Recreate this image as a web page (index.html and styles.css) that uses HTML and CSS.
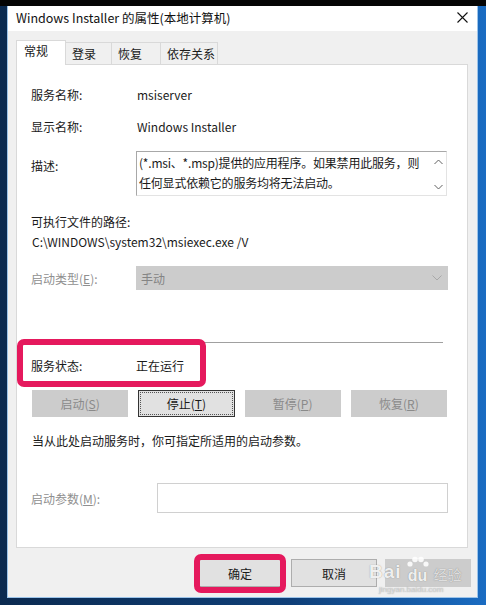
FILE: index.html
```html
<!DOCTYPE html>
<html lang="zh-CN">
<head>
    <meta charset="UTF-8">
    <meta name="viewport" content="width=device-width, initial-scale=1.0">
    <title>Windows Installer 的属性</title>
    <link rel="stylesheet" href="styles.css">
</head>
<body>
    <div class="topbar"></div>
    <div class="window">
        <div class="titlebar">
            <span class="title">Windows Installer 的属性(本地计算机)</span>
            <svg class="close" width="11" height="11" viewBox="0 0 11 11">
                <path d="M0.5 0.5 L10.5 10.5 M10.5 0.5 L0.5 10.5" stroke="#111" stroke-width="1.1" fill="none"/>
            </svg>
        </div>
        <div class="dialog">
            <div class="tabs">
                <div class="tab active" style="width:50px">常规</div>
                <div class="tab" style="width:46px">登录</div>
                <div class="tab" style="width:49px">恢复</div>
                <div class="tab" style="width:57px">依存关系</div>
            </div>
            <div class="panel">
                <div class="row r-name">
                    <span>服务名称:</span>
                    <span class="value">msiserver</span>
                </div>
                <div class="row r-display">
                    <span>显示名称:</span>
                    <span class="value">Windows Installer</span>
                </div>
                <div class="row r-desc">
                    <span class="desc-label">描述:</span>
                    <div class="textbox">
                        <div class="textbox-text">(*.msi、*.msp)提供的应用程序。如果禁用此服务，则<br>任何显式依赖它的服务均将无法启动。</div>
                        <div class="scroll">
                            <svg width="9" height="6" viewBox="0 0 9 6"><path d="M0.5 5 L4.5 1 L8.5 5" stroke="#606060" fill="none"/></svg>
                            <svg width="9" height="6" viewBox="0 0 9 6"><path d="M0.5 1 L4.5 5 L8.5 1" stroke="#606060" fill="none"/></svg>
                        </div>
                    </div>
                </div>
                <div class="path-label">可执行文件的路径:</div>
                <div class="path">C:\WINDOWS\system32\msiexec.exe /V</div>
                <div class="row r-type">
                    <span class="disabled">启动类型(<u>E</u>):</span>
                    <div class="select">
                        <span>手动</span>
                        <svg width="10" height="6" viewBox="0 0 10 6"><path d="M0.5 0.5 L5 5 L9.5 0.5" stroke="#a8a8a8" fill="none"/></svg>
                    </div>
                </div>
                <div class="separator"></div>
                <div class="row r-status">
                    <span>服务状态:</span>
                    <span>正在运行</span>
                </div>
                <div class="buttons">
                    <button type="button" class="btn off">启动(<u>S</u>)</button>
                    <button type="button" class="btn focus">停止(<u>T</u>)</button>
                    <button type="button" class="btn off">暂停(<u>P</u>)</button>
                    <button type="button" class="btn off">恢复(<u>R</u>)</button>
                </div>
                <div class="hint">当从此处启动服务时，你可指定所适用的启动参数。</div>
                <div class="row r-param">
                    <span class="disabled">启动参数(<u>M</u>):</span>
                    <div class="input"></div>
                </div>
                <div class="mark mark-status"></div>
            </div>
            <div class="actions">
                <button type="button" class="btn ok">确定</button>
                <button type="button" class="btn">取消</button>
                <button type="button" class="btn off"></button>
            </div>
        </div>
        <div class="mark mark-ok"></div>
        <div class="watermark">
            <span class="wm-bai">Bai</span>
            <span class="wm-du">
                <svg class="wm-paw" width="26" height="12" viewBox="0 0 26 12">
                    <circle cx="5" cy="8" r="2.6" fill="rgba(255,255,255,0.85)"/>
                    <circle cx="10" cy="3.5" r="2.8" fill="rgba(255,255,255,0.85)"/>
                    <circle cx="16" cy="3.5" r="2.8" fill="rgba(255,255,255,0.85)"/>
                    <circle cx="21" cy="8" r="2.6" fill="rgba(255,255,255,0.85)"/>
                </svg>
                du
            </span>
            <span class="wm-jy">经验</span>
            <div class="wm-url">jingyan.baidu.com</div>
        </div>
    </div>
</body>
</html>
```

FILE: styles.css
```css
*{
    margin: 0;
    padding: 0;
    box-sizing: border-box;
}
body{
    width: 486px;
    height: 605px;
    overflow: hidden;
    background: linear-gradient(90deg, #0b2a50 0%, #0f3f78 60%, #1a6cc2 100%);
    font-family: "Noto Sans CJK SC", "Noto Sans", sans-serif;
    font-size: 12px;
    color: #1a1a1a;
}
.topbar{
    height: 6px;
    background-color: #050505;
}
.window{
    position: relative;
    width: 471px;
    height: 592px;
    margin-left: 7px;
    border: 1px solid #9cc4ea;
    border-top: none;
    background-color: #f0f0f0;
}
.titlebar{
    height: 25px;
    background-color: #fff;
    display: flex;
    align-items: center;
    justify-content: space-between;
    padding: 0 9px 2px 8px;
}
.title{
    font-size: 12.5px;
    color: #111;
}
.dialog{
    padding: 9px 9px 0 8px;
}
.tabs{
    display: flex;
    align-items: flex-end;
    height: 24px;
}
.tab{
    height: 22px;
    padding: 2px 0 0 6px;
    border: 1px solid #d9d9d9;
    border-bottom: none;
    border-left: none;
    background-color: #f0f0f0;
    line-height: 18px;
}
.tab.active{
    position: relative;
    z-index: 1;
    height: 25px;
    margin-bottom: -1px;
    padding: 1px 0 0 7px;
    border-left: 1px solid #d9d9d9;
    background-color: #fff;
}
.panel{
    position: relative;
    height: 484px;
    border: 1px solid #d9d9d9;
    background-color: #fff;
    padding: 0 20px 0 14px;
}
.row{
    display: grid;
    grid-template-columns: 105px 1fr;
    align-items: center;
    height: 20px;
}
.value{
    padding-left: 1px;
}
.r-name{
    margin-top: 19px;
}
.r-display{
    margin-top: 12px;
}
.r-desc{
    margin-top: 15px;
    height: 45px;
    align-items: start;
}
.desc-label{
    padding-top: 6px;
}
.textbox{
    height: 45px;
    border: 1px solid #a8a8a8;
    border-right-color: #e3e3e3;
    border-bottom-color: #e3e3e3;
    display: flex;
}
.textbox-text{
    flex: 1;
    padding: 1px 0 0 2px;
    line-height: 20px;
    white-space: nowrap;
    overflow: hidden;
    letter-spacing: -0.2px;
}
.scroll{
    width: 16px;
    display: flex;
    flex-direction: column;
    justify-content: space-between;
    align-items: center;
    padding: 7px 0 5px;
}
.path-label{
    margin-top: 16px;
    height: 20px;
    line-height: 20px;
}
.path{
    height: 20px;
    line-height: 20px;
    padding-left: 1px;
}
.r-type{
    margin-top: 14px;
    height: 24px;
}
.disabled{
    color: #8f8f8f;
}
.select{
    height: 24px;
    margin-right: -1px;
    background-color: #cccccc;
    color: #848484;
    display: flex;
    align-items: center;
    justify-content: space-between;
    padding: 0 6px 0 5px;
}
.separator{
    margin: 52px 4px 0 0;
    height: 1px;
    background-color: #a0a0a0;
}
.r-status{
    margin-top: 12px;
}
.buttons{
    margin: 15px 0 0 1px;
    display: grid;
    grid-template-columns: repeat(4, 1fr);
    gap: 10px;
}
.btn{
    font-family: inherit;
    font-size: 12px;
    height: 27px;
    border: 1px solid #adadad;
    background-color: #e1e1e1;
    color: #1a1a1a;
}
.btn u{
    text-decoration-thickness: 1px;
}
.btn.off{
    background-color: #cccccc;
    border-color: #cccccc;
    color: #8a8a8a;
}
.btn.focus{
    border: 1px solid #333;
    outline: 1px dotted #555;
    outline-offset: -3px;
}
.hint{
    margin: 14px 0 0 1px;
    height: 20px;
    line-height: 20px;
}
.r-param{
    margin-top: 32px;
    height: 30px;
    grid-template-columns: 126px 1fr;
}
.input{
    height: 30px;
    margin-right: -1px;
    border: 1px solid #d0d0d0;
}
.mark{
    position: absolute;
    border: 6px solid #e5195d;
    border-radius: 7px;
}
.mark-status{
    left: 0;
    top: 274px;
    width: 189px;
    height: 48px;
}
.actions{
    margin: 11px -3px 0 0;
    display: flex;
    justify-content: flex-end;
    gap: 8px;
}
.actions .btn{
    width: 86px;
    height: 28px;
}
.mark-ok{
    left: 186px;
    top: 548px;
    width: 92px;
    height: 39px;
}
.watermark{
    position: absolute;
    left: 361px;
    top: 550px;
    width: 110px;
    color: rgba(255, 255, 255, 0.9);
    text-shadow: 0 0 1px rgba(90, 90, 90, 0.7);
    white-space: nowrap;
    display: flex;
    flex-wrap: wrap;
    align-items: flex-end;
}
.wm-bai{
    font-family: "Liberation Sans", sans-serif;
    font-size: 19px;
    font-weight: bold;
    letter-spacing: 1px;
    line-height: 26px;
}
.wm-du{
    display: flex;
    flex-direction: column;
    align-items: center;
    font-family: "Liberation Sans", sans-serif;
    font-size: 16px;
    font-weight: bold;
    line-height: 18px;
    margin-left: 3px;
}
.wm-paw{
    margin-bottom: -1px;
}
.wm-jy{
    font-size: 14px;
    line-height: 22px;
    margin-left: 3px;
    color: rgba(235, 235, 235, 0.9);
}
.wm-url{
    width: 100%;
    font-family: "Liberation Sans", sans-serif;
    font-size: 8px;
    line-height: 9px;
    padding-left: 10px;
    color: rgba(255, 255, 255, 0.55);
}
```
